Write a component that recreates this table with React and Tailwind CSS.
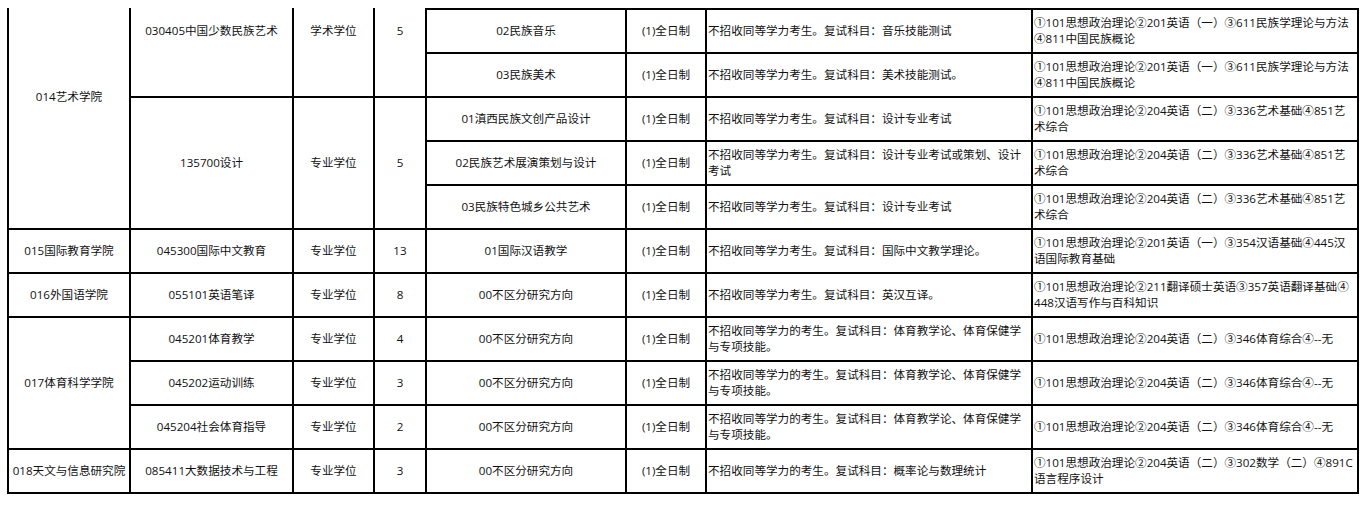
import React from "react";

const exam1 = "①101思想政治理论②201英语（一）③611民族学理论与方法④811中国民族概论";
const exam2 = "①101思想政治理论②204英语（二）③336艺术基础④851艺术综合";
const exam3 = "①101思想政治理论②204英语（二）③346体育综合④--无";
const sportNote = "不招收同等学力的考生。复试科目：体育教学论、体育保健学与专项技能。";

// left-side cells, in order of placement; span = rows covered
const rows = [
  {
    left: [
      { text: "014艺术学院", span: "row-span-5", lift: true },
      { text: "030405中国少数民族艺术", span: "row-span-2", lift: true },
      { text: "学术学位", span: "row-span-2", lift: true },
      { text: "5", span: "row-span-2", lift: true },
    ],
    dir: "02民族音乐",
    note: "不招收同等学力考生。复试科目：音乐技能测试",
    exam: exam1,
    first: true,
  },
  { left: [], dir: "03民族美术", note: "不招收同等学力考生。复试科目：美术技能测试。", exam: exam1 },
  {
    left: [
      { text: "135700设计", span: "row-span-3" },
      { text: "专业学位", span: "row-span-3" },
      { text: "5", span: "row-span-3" },
    ],
    dir: "01滇西民族文创产品设计",
    note: "不招收同等学力考生。复试科目：设计专业考试",
    exam: exam2,
  },
  { left: [], dir: "02民族艺术展演策划与设计", note: "不招收同等学力考生。复试科目：设计专业考试或策划、设计考试", exam: exam2 },
  { left: [], dir: "03民族特色城乡公共艺术", note: "不招收同等学力考生。复试科目：设计专业考试", exam: exam2 },
  {
    left: [{ text: "015国际教育学院" }, { text: "045300国际中文教育" }, { text: "专业学位" }, { text: "13" }],
    dir: "01国际汉语教学",
    note: "不招收同等学力考生。复试科目：国际中文教学理论。",
    exam: "①101思想政治理论②201英语（一）③354汉语基础④445汉语国际教育基础",
  },
  {
    left: [{ text: "016外国语学院" }, { text: "055101英语笔译" }, { text: "专业学位" }, { text: "8" }],
    dir: "00不区分研究方向",
    note: "不招收同等学力考生。复试科目：英汉互译。",
    exam: "①101思想政治理论②211翻译硕士英语③357英语翻译基础④\u200B448汉语写作与百科知识",
  },
  {
    left: [
      { text: "017体育科学学院", span: "row-span-3" },
      { text: "045201体育教学" },
      { text: "专业学位" },
      { text: "4" },
    ],
    dir: "00不区分研究方向",
    note: sportNote,
    exam: exam3,
  },
  {
    left: [{ text: "045202运动训练" }, { text: "专业学位" }, { text: "3" }],
    dir: "00不区分研究方向",
    note: sportNote,
    exam: exam3,
  },
  {
    left: [{ text: "045204社会体育指导" }, { text: "专业学位" }, { text: "2" }],
    dir: "00不区分研究方向",
    note: sportNote,
    exam: exam3,
  },
  {
    left: [{ text: "018天文与信息研究院" }, { text: "085411大数据技术与工程" }, { text: "专业学位" }, { text: "3" }],
    dir: "00不区分研究方向",
    note: "不招收同等学力的考生。复试科目：概率论与数理统计",
    exam: "①101思想政治理论②204英语（二）③302数学（二）④891C语言程序设计",
  },
];

const Cell = ({ children, className = "" }) => (
  <div className={`bg-white flex items-center leading-[16px] ${className}`}>{children}</div>
);

export default function App() {
  return (
    <div
      className="min-h-[506px] bg-white pt-[8px] pl-[7px] text-[11.6px] text-[#111]"
      style={{ fontFamily: '"Open Sans", "Noto Sans CJK SC", sans-serif' }}
    >
      <div className="inline-grid grid-cols-[120px_161px_79px_50px_198px_78px_324px_324px] grid-rows-[44px_repeat(10,42px)] gap-[2px] bg-black px-[2px] pb-[2px]">
        {rows.map((row, i) => (
          <React.Fragment key={i}>
            {row.left.map((c, j) => (
              <Cell
                key={j}
                className={`justify-center text-center ${c.span || ""} ${c.lift ? "pb-[42px]" : ""}`}
              >
                {c.text}
              </Cell>
            ))}
            <Cell className={`justify-center text-center ${row.first ? "border-t-2 border-black" : ""}`}>
              {row.dir}
            </Cell>
            <Cell className={`justify-center text-center ${row.first ? "border-t-2 border-black" : ""}`}>
              (1)全日制
            </Cell>
            <Cell className={`px-[1px] ${row.first ? "border-t-2 border-black" : ""}`}>{row.note}</Cell>
            <Cell className={`px-[1px] ${row.first ? "border-t-2 border-black" : ""}`}>{row.exam}</Cell>
          </React.Fragment>
        ))}
      </div>
    </div>
  );
}
